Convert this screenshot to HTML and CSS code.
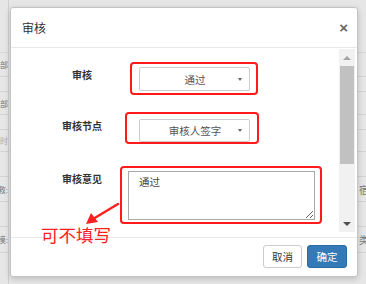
FILE: index.html
```html
<!DOCTYPE html>
<html lang="zh-CN">
<head>
  <meta charset="UTF-8" />
  <title>审核</title>
  <link rel="stylesheet" href="styles.css">
</head>
<body>
  <div class="page">
    <div class="bg">
      <div class="row h53"><span class="cl"></span><span class="cr"></span></div>
      <div class="row h24"><span class="cl">全部</span><span class="cr"></span></div>
      <div class="row h15"><span class="cl"></span><span class="cr"></span></div>
      <div class="row h23"><span class="cl">全部</span><span class="cr"></span></div>
      <div class="row h15"><span class="cl"></span><span class="cr"></span></div>
      <div class="row h22"><span class="cl light">时</span><span class="cr"></span></div>
      <div class="row h25"><span class="cl"></span><span class="cr"></span></div>
      <div class="row h25"><span class="cl">救:</span><span class="cr">宿</span></div>
      <div class="row h25"><span class="cl"></span><span class="cr"></span></div>
      <div class="row h26"><span class="cl">模:</span><span class="cr">类</span></div>
      <div class="row h31"><span class="cl"></span><span class="cr"></span></div>
    </div>

    <div class="modal">
      <div class="modal-header">
        <span class="modal-title">审核</span>
        <span class="close">×</span>
      </div>
      <div class="modal-body">
        <div class="form">
          <div class="form-row">
            <label class="form-label lbl1">审核</label>
            <div class="mark mark1">
              <div class="select sel1"><span class="sel-text">通过</span><span class="caret"></span></div>
            </div>
          </div>
          <div class="form-row row2">
            <label class="form-label lbl2">审核节点</label>
            <div class="mark mark2">
              <div class="select sel2"><span class="sel-text">审核人签字</span><span class="caret"></span></div>
            </div>
          </div>
          <div class="form-row row3">
            <label class="form-label lbl3">审核意见</label>
            <div class="mark mark3">
              <textarea class="opinion" readonly>通过</textarea>
            </div>
          </div>
        </div>
        <div class="scrollbar">
          <div class="sb-btn"><span class="tri-up"></span></div>
          <div class="sb-thumb"></div>
          <div class="sb-track"></div>
          <div class="sb-btn"><span class="tri-down"></span></div>
        </div>
      </div>
      <div class="modal-footer">
        <button class="btn btn-default">取消</button>
        <button class="btn btn-primary">确定</button>
      </div>
    </div>

    <svg class="arrow" width="40" height="30" viewBox="80 200 40 30">
      <line x1="118" y1="204" x2="93" y2="219" stroke="#ff1f1f" stroke-width="2.5" stroke-linecap="round"/>
      <polygon points="86,224 91,213 98,222" fill="#ff1f1f"/>
    </svg>
    <div class="note">可不填写</div>
  </div>
</body>
</html>
```

FILE: styles.css
```css
body { margin: 0; font-family: "Liberation Sans", "Noto Sans CJK SC", sans-serif; background: #e6e6e6; }
.page { position: relative; width: 366px; height: 284px; overflow: hidden; }

/* dimmed table behind the dialog */
.bg { display: flex; flex-direction: column; }
.row { display: flex; justify-content: space-between; border-bottom: 1px solid #d3d3d3; box-sizing: border-box; }
.row.h53 { height: 53px; border-bottom-color: #d6d6d6; }
.row.h24 { height: 24px; }
.row.h15 { height: 15px; }
.row.h23 { height: 23px; }
.row.h22 { height: 22px; }
.row.h25 { height: 25px; }
.row.h26 { height: 26px; }
.row.h31 { height: 31px; border-bottom: none; }
.cl, .cr { display: flex; align-items: center; overflow: hidden; font-size: 10px; color: #777; white-space: nowrap; }
.cl { width: 8px; justify-content: flex-end; border-right: 1px solid #d0d0d0; font-size: 8px; }
.cr { width: 7px; justify-content: flex-start; }
.cl.light { color: #aaa; }

/* dialog */
.modal { position: absolute; left: 10px; top: 7px; width: 348px; height: 270px; box-sizing: border-box; background: #fff; border: 1px solid #c4c4c4; border-radius: 3px; box-shadow: 0 2px 6px rgba(0,0,0,0.18); display: flex; flex-direction: column; }
.modal-header { height: 40px; box-sizing: border-box; border-bottom: 1px solid #e8e8e8; display: flex; align-items: center; justify-content: space-between; padding: 0 9px 0 11px; }
.modal-title { font-size: 12px; color: #333; }
.close { font-size: 15px; font-weight: bold; color: #666; }

.modal-body { height: 189px; display: flex; }
.form { flex: 1; padding-top: 14px; }
.form-row { display: flex; align-items: flex-start; }
.row2 { margin-top: 17px; }
.row3 { margin-top: 22px; }
.form-label { width: 80px; margin-left: 31px; text-align: center; font-size: 10px; font-weight: bold; color: #333; line-height: 14px; }
.lbl1 { margin-top: 7px; }
.lbl2 { margin-top: 8px; }
.lbl3 { margin-top: 7px; }

.mark { border: 2px solid #ff1a1a; border-radius: 4px; box-sizing: border-box; }
.mark1 { margin-left: 8px; width: 128px; height: 33px; padding: 3px 6px 0 7px; }
.mark2 { margin-left: 3px; width: 134px; height: 32px; padding: 5px 7px 0 12px; }
.mark3 { margin-left: -2px; width: 202px; height: 58px; padding: 3px 5px 2px 6px; }

.select { width: 111px; box-sizing: border-box; border: 1px solid #ccc; border-radius: 2px; background: #fff; display: flex; align-items: center; padding: 0 7px 0 12px; font-size: 10.5px; color: #555; }
.sel1 { height: 24px; }
.sel2 { height: 23px; }
.sel-text { flex: 1; text-align: center; }
.caret { width: 0; height: 0; border-left: 2.5px solid transparent; border-right: 2.5px solid transparent; border-top: 3px solid #666; }

.opinion { display: block; width: 187px; height: 49px; box-sizing: border-box; margin: 0; border: 1px solid #a9a9a9; padding: 2px 10px; font-family: inherit; font-size: 10.5px; color: #444; resize: both; }

.scrollbar { width: 16px; margin: 1px 2px 5px 0; background: #f1f1f1; display: flex; flex-direction: column; }
.sb-btn { height: 17px; display: flex; align-items: center; justify-content: center; }
.sb-thumb { height: 98px; margin: 0 1px; background: #c1c1c1; }
.sb-track { flex: 1; }
.tri-up { width: 0; height: 0; border-left: 4px solid transparent; border-right: 4px solid transparent; border-bottom: 4px solid #a3a3a3; }
.tri-down { width: 0; height: 0; border-left: 4px solid transparent; border-right: 4px solid transparent; border-top: 4px solid #505050; }

.modal-footer { flex: 1; border-top: 1px solid #e8e8e8; display: flex; justify-content: flex-end; align-items: flex-start; gap: 5px; padding: 7px 10px 0 0; }
.btn { height: 23px; padding: 0; font-family: inherit; font-size: 10.5px; border-radius: 3px; border: 1px solid #ccc; }
.btn-default { width: 39px; background: #fff; color: #333; }
.btn-primary { width: 40px; background: #337ab7; border-color: #2e6da4; color: #fff; }

/* annotation drawn on top of the screenshot */
.arrow { position: absolute; left: 80px; top: 200px; }
.note { position: absolute; left: 41px; top: 226px; font-size: 17.5px; line-height: 20px; color: #ff2020; }
```
